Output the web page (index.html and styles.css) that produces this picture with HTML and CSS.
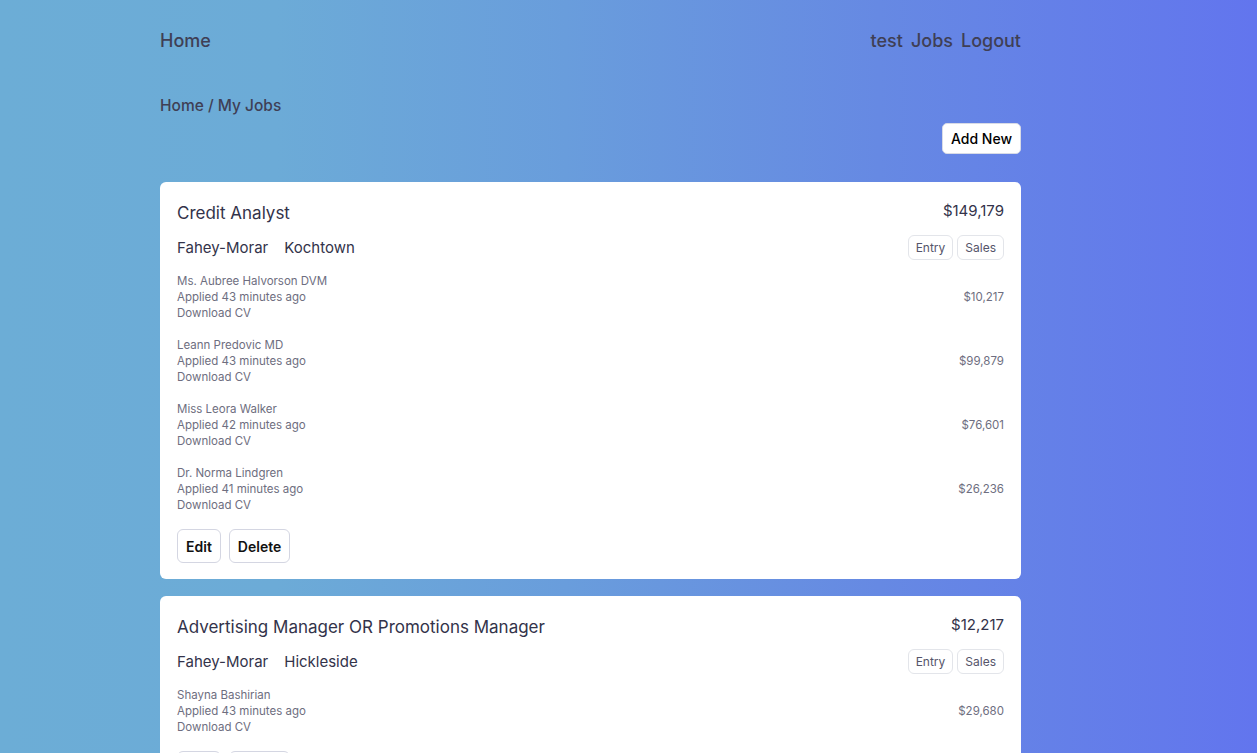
FILE: index.html
```html
<!DOCTYPE html>
<html lang="en">
<head>
<meta charset="utf-8">
<title>My Jobs</title>
<link rel="stylesheet" href="styles.css">
</head>
<body>
<div class="page">
  <nav class="nav">
    <a class="nav-link" href="#">Home</a>
    <div class="nav-right">
      <a class="nav-link" href="#">test</a>
      <a class="nav-link" href="#">Jobs</a>
      <a class="nav-link" href="#">Logout</a>
    </div>
  </nav>

  <div class="breadcrumb">Home / My Jobs</div>

  <div class="actions">
    <button class="btn-add">Add New</button>
  </div>

  <div class="card">
    <div class="card-head">
      <h2 class="job-title">Credit Analyst</h2>
      <div class="job-salary">$149,179</div>
    </div>
    <div class="card-sub">
      <div class="company"><span>Fahey-Morar</span><span>Kochtown</span></div>
      <div class="tags"><span class="tag">Entry</span><span class="tag">Sales</span></div>
    </div>
    <div class="applicants">
      <div class="applicant">
        <div class="app-info"><div>Ms. Aubree Halvorson DVM</div><div>Applied 43 minutes ago</div><div>Download CV</div></div>
        <div class="app-salary">$10,217</div>
      </div>
      <div class="applicant">
        <div class="app-info"><div>Leann Predovic MD</div><div>Applied 43 minutes ago</div><div>Download CV</div></div>
        <div class="app-salary">$99,879</div>
      </div>
      <div class="applicant">
        <div class="app-info"><div>Miss Leora Walker</div><div>Applied 42 minutes ago</div><div>Download CV</div></div>
        <div class="app-salary">$76,601</div>
      </div>
      <div class="applicant">
        <div class="app-info"><div>Dr. Norma Lindgren</div><div>Applied 41 minutes ago</div><div>Download CV</div></div>
        <div class="app-salary">$26,236</div>
      </div>
    </div>
    <div class="card-buttons">
      <button class="btn">Edit</button>
      <button class="btn">Delete</button>
    </div>
  </div>

  <div class="card">
    <div class="card-head">
      <h2 class="job-title">Advertising Manager OR Promotions Manager</h2>
      <div class="job-salary">$12,217</div>
    </div>
    <div class="card-sub">
      <div class="company"><span>Fahey-Morar</span><span>Hickleside</span></div>
      <div class="tags"><span class="tag">Entry</span><span class="tag">Sales</span></div>
    </div>
    <div class="applicants">
      <div class="applicant">
        <div class="app-info"><div>Shayna Bashirian</div><div>Applied 43 minutes ago</div><div>Download CV</div></div>
        <div class="app-salary">$29,680</div>
      </div>
    </div>
    <div class="card-buttons">
      <button class="btn">Edit</button>
      <button class="btn">Delete</button>
    </div>
  </div>
</div>
</body>
</html>
```

FILE: styles.css
```css
* { box-sizing: border-box; }
html, body { margin: 0; padding: 0; }
body {
  font-family: Inter, "Noto Sans", "Liberation Sans", sans-serif;
  color: #3b3b4f;
  min-height: 100vh;
  background: linear-gradient(to right, #6cadd6 0%, #6cabd7 22%, #699ddc 45%, #6689e3 70%, #6275ee 100%);
  background-attachment: fixed;
}
.page {
  width: 861px;
  margin-left: 160px;
  padding-top: 28px;
}
.nav {
  display: flex;
  justify-content: space-between;
  align-items: center;
  height: 24px;
}
.nav-right { display: flex; gap: 8px; }
.nav-link {
  font-size: 18px;
  font-weight: 500;
  color: #3f3f55;
  text-decoration: none;
}
.breadcrumb {
  margin-top: 44px;
  font-size: 15.5px;
  font-weight: 500;
  color: #3f3f55;
  line-height: 20px;
}
.actions {
  display: flex;
  justify-content: flex-end;
  margin-top: 7px;
}
.btn-add {
  font-family: inherit;
  font-size: 14px;
  font-weight: 500;
  color: #000;
  background: #fff;
  border: 1px solid #d8dbe6;
  border-radius: 5px;
  height: 31px;
  padding: 0 8px;
}
.card {
  background: #fff;
  border-radius: 6px;
  margin-top: 28px;
  padding: 17px 17px 16px;
}
.card + .card { margin-top: 17px; }
.card-head {
  display: flex;
  justify-content: space-between;
  align-items: flex-start;
}
.job-title {
  margin: 0;
  font-size: 17px;
  font-weight: 400;
  line-height: 28px;
  color: #33334a;
}
.job-salary {
  font-size: 15px;
  line-height: 24px;
  color: #33334a;
}
.card-sub {
  margin-top: 8px;
  display: flex;
  justify-content: space-between;
  align-items: center;
}
.company {
  display: flex;
  gap: 16px;
  font-size: 15px;
  color: #33334a;
}
.tags { display: flex; gap: 4px; }
.tag {
  font-size: 12px;
  color: #55556a;
  border: 1px solid #e3e5ea;
  border-radius: 6px;
  height: 25px;
  line-height: 23px;
  padding: 0 7px;
}
.applicants {
  margin-top: 13px;
  display: flex;
  flex-direction: column;
  gap: 16px;
}
.applicant {
  display: flex;
  justify-content: space-between;
  align-items: center;
  font-size: 11.5px;
  line-height: 16px;
  color: #6e6e80;
}
.app-salary { color: #6e6e80; }
.card-buttons {
  margin-top: 16px;
  display: flex;
  gap: 8px;
}
.btn {
  font-family: inherit;
  font-size: 14px;
  font-weight: 600;
  color: #111;
  background: #fff;
  border: 1px solid #d4d6e2;
  border-radius: 6px;
  height: 34px;
  padding: 0 8px;
}
```
